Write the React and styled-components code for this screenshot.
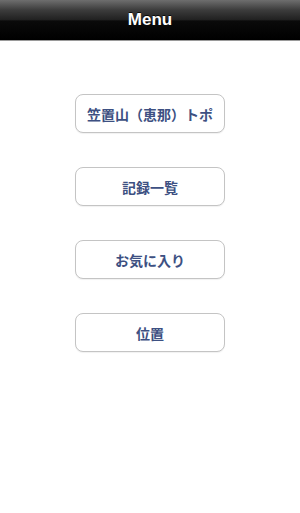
import styled, { createGlobalStyle } from "styled-components";

const GlobalStyle = createGlobalStyle`
  html, body {
    margin: 0;
    padding: 0;
    background: #ffffff;
  }
  body {
    font-family: "Noto Sans CJK JP", "Liberation Sans", sans-serif;
  }
`;

const items = ["笠置山（恵那）トポ", "記録一覧", "お気に入り", "位置"];

function App() {
  return (
    <Page>
      <GlobalStyle />
      <TopBar>
        <Title>Menu</Title>
      </TopBar>
      <MenuList>
        {items.map((label) => (
          <MenuButton key={label}>{label}</MenuButton>
        ))}
      </MenuList>
    </Page>
  );
}

export default App;

const Page = styled.div({
  width: "300px",
  height: "513px",
  background: "#ffffff",
  display: "flex",
  flexDirection: "column",
  overflow: "hidden",
});

const TopBar = styled.div({
  height: "40px",
  flexShrink: 0,
  display: "flex",
  alignItems: "center",
  justifyContent: "center",
  background:
    "linear-gradient(to bottom, #6e6e6e 0%, #3c3c3c 25%, #202020 50%, #0a0a0a 52%, #000000 100%)",
  borderBottom: "1px solid #9a9a9a",
});

const Title = styled.h1({
  margin: 0,
  color: "#ffffff",
  fontFamily: '"Liberation Sans", Arial, sans-serif',
  fontWeight: "bold",
  fontSize: "17px",
  textShadow: "0 -1px 0 rgba(0,0,0,0.8)",
});

const MenuList = styled.div({
  display: "flex",
  flexDirection: "column",
  alignItems: "center",
  gap: "34px",
  paddingTop: "53px",
});

const MenuButton = styled.button({
  width: "150px",
  height: "39px",
  boxSizing: "border-box",
  background: "#ffffff",
  border: "1px solid #c4c4c4",
  borderRadius: "8px",
  boxShadow: "0 1px 1px rgba(0,0,0,0.06)",
  color: "#3d5082",
  fontFamily: '"Noto Sans CJK JP", "Liberation Sans", sans-serif',
  fontWeight: "bold",
  fontSize: "14px",
  padding: 0,
  cursor: "pointer",
});
